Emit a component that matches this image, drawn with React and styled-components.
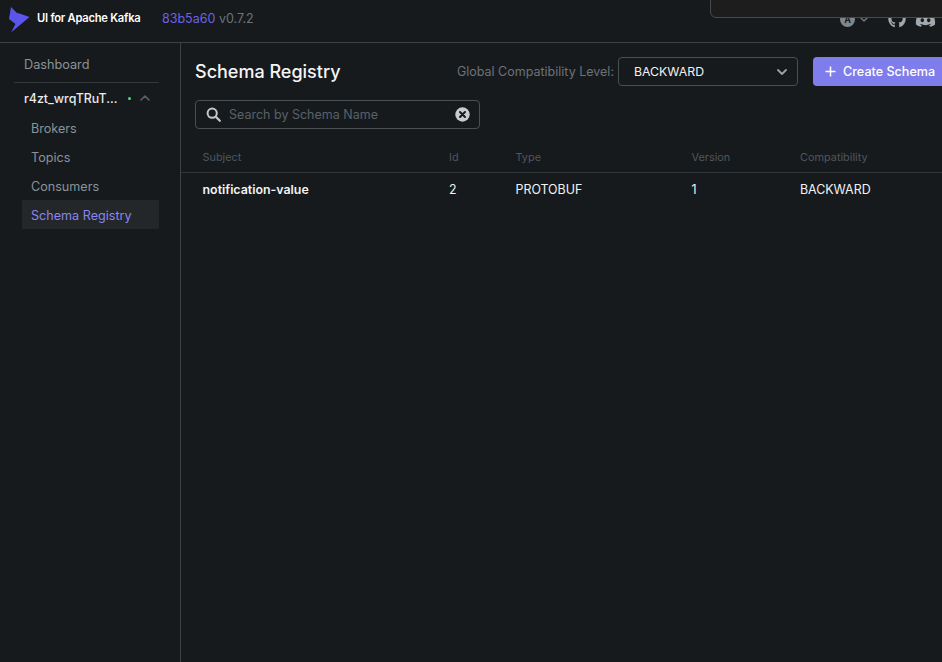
import React from "react";
import styled, { createGlobalStyle } from "styled-components";
import { FaGithub, FaDiscord } from "react-icons/fa";

const GlobalStyle = createGlobalStyle`
  html, body {
    margin: 0;
    height: 100%;
    overflow: hidden;
    background: #171a1c;
    font-family: Inter, "Liberation Sans", sans-serif;
    font-size: 14px;
  }
  #root { height: 100%; }
`;

const Page = styled.div`
  position: relative;
  width: 942px;
  height: 662px;
  overflow: hidden;
  background: #171a1c;
  display: flex;
  flex-direction: column;
`;

// top bar
const Header = styled.header`
  flex: 0 0 43px;
  box-sizing: border-box;
  border-bottom: 1px solid #3d4144;
  display: flex;
  align-items: center;
  padding: 0 6px 6px 9px;
`;

const Brand = styled.div`
  width: 153px;
  display: flex;
  align-items: center;
  gap: 7px;
  color: #fff;
  font-size: 11.2px;
  font-weight: 600;
  letter-spacing: -0.25px;
`;

const LogoMark = styled.svg`
  margin-top: 3px;
  flex: none;
`;

const Version = styled.div`
  font-size: 12.5px;
  color: #6b7278;
  b {
    font-weight: 400;
    color: #6a63e8;
  }
`;

const HeaderIcons = styled.div`
  margin-left: auto;
  margin-top: 2px;
  display: flex;
  align-items: center;
  color: #a1a8ae;
`;

const Avatar = styled.span`
  width: 15px;
  height: 15px;
  border-radius: 50%;
  background: #7f878d;
  color: #171a1c;
  font-size: 9px;
  font-weight: 700;
  display: flex;
  align-items: center;
  justify-content: center;
  margin-right: 4px;
`;

const IconGap = styled.span`
  display: flex;
  margin-left: ${(p) => p.$left}px;
`;

const Popup = styled.div`
  position: absolute;
  top: -10px;
  left: 710px;
  width: 280px;
  height: 28px;
  box-sizing: border-box;
  background: #1e1d1d;
  border: 1px solid #454a4d;
  border-radius: 6px;
`;

const Body = styled.div`
  flex: 1;
  display: flex;
  min-height: 0;
`;

// left nav
const Sidebar = styled.nav`
  flex: 0 0 181px;
  box-sizing: border-box;
  border-right: 1px solid #3d4144;
  padding: 7px 21px 0 14px;
`;

const DashLink = styled.div`
  height: 33px;
  box-sizing: border-box;
  border-bottom: 1px solid #33373a;
  padding: 7px 0 0 10px;
  color: #8b9299;
  font-size: 12.7px;
  line-height: 16px;
`;

const Cluster = styled.div`
  height: 30px;
  display: flex;
  align-items: center;
  padding-left: 10px;
  color: #e8eaec;
  font-size: 12.4px;
  font-weight: 500;
`;

const Dot = styled.span`
  width: 3px;
  height: 3px;
  border-radius: 50%;
  background: #5cd685;
  margin: 0 9px 0 10px;
`;

const NavItem = styled.div`
  height: 29px;
  box-sizing: border-box;
  margin-left: 8px;
  padding: 1px 0 0 9px;
  display: flex;
  align-items: center;
  font-size: 12.6px;
  color: ${(p) => (p.$active ? "#8a85f0" : "#8b9299")};
  background: ${(p) => (p.$active ? "#23272a" : "transparent")};
`;

// main content
const Main = styled.main`
  flex: 1;
  min-width: 0;
`;

const TitleRow = styled.div`
  height: 57px;
  display: flex;
  align-items: center;
  padding-left: 14px;
`;

const Title = styled.h1`
  margin: 0 auto 0 0;
  font-size: 18px;
  line-height: 24px;
  font-weight: 500;
  color: #f4f5f6;
`;

const GlobalLabel = styled.span`
  font-size: 12.5px;
  color: #6b7278;
  margin-right: 4px;
`;

const Select = styled.div`
  width: 180px;
  height: 29px;
  box-sizing: border-box;
  border: 1px solid #4a4f52;
  border-radius: 4px;
  padding: 0 10px 0 15px;
  display: flex;
  align-items: center;
  justify-content: space-between;
  color: #f1f2f3;
  font-size: 12.3px;
`;

const CreateButton = styled.button`
  width: 134px;
  height: 29px;
  margin: 0 -5px 0 15px;
  flex: none;
  border: 0;
  border-radius: 4px;
  background: #7f7ceb;
  color: #fff;
  font: 500 12.6px Inter, "Liberation Sans", sans-serif;
  display: flex;
  align-items: center;
  gap: 7px;
  padding: 0 0 0 12px;
`;

const SearchBox = styled.div`
  width: 285px;
  height: 29px;
  margin-left: 14px;
  box-sizing: border-box;
  border: 1px solid #4a4f52;
  border-radius: 4px;
  padding: 0 9px 0 10px;
  display: flex;
  align-items: center;
  color: #5a6167;
  font-size: 12.5px;
`;

const SearchText = styled.span`
  margin-left: 8px;
  flex: 1;
`;

const Row = styled.div`
  display: grid;
  grid-template-columns: 246.5px 66.5px 176px 108.5px 1fr;
  padding-left: 21.5px;
  align-items: center;
`;

const HeadRow = styled(Row)`
  margin-top: 14px;
  height: 30px;
  box-sizing: border-box;
  border-bottom: 1px solid #33373a;
  padding-bottom: 2px;
  color: #4f565c;
  font-size: 10.9px;
`;

const BodyRow = styled(Row)`
  height: 33px;
  color: #f1f2f3;
  font-size: 12.4px;
`;

const Subject = styled.span`
  font-weight: 600;
`;

function Chevron({ up, size = 10, color = "#8b9299", width = 1.6 }) {
  return (
    <svg width={size} height={size} viewBox="0 0 10 10" fill="none">
      <path
        d={up ? "M1 7l4-4 4 4" : "M1 3l4 4 4-4"}
        stroke={color}
        strokeWidth={width}
        strokeLinecap="round"
        strokeLinejoin="round"
      />
    </svg>
  );
}

function Logo() {
  return (
    <LogoMark width="21" height="26" viewBox="0 0 21 26">
      <path d="M2 0l6 6 2.5.5L20.5 10 11 18 2 25.5 6.5 17 0 12z" fill="#5b55ec" />
    </LogoMark>
  );
}

function SearchIcon() {
  return (
    <svg width="15" height="15" viewBox="0 0 15 15" fill="none">
      <circle cx="6.2" cy="6.2" r="4.6" stroke="#c4c8cb" strokeWidth="2" />
      <path d="M9.8 9.8L13.8 13.8" stroke="#c4c8cb" strokeWidth="2.2" strokeLinecap="round" />
    </svg>
  );
}

function ClearIcon() {
  return (
    <svg width="15" height="15" viewBox="0 0 15 15">
      <circle cx="7.5" cy="7.5" r="7.2" fill="#c9cccf" />
      <path d="M5 5l5 5M10 5l-5 5" stroke="#171a1c" strokeWidth="2" strokeLinecap="round" />
    </svg>
  );
}

function PlusIcon() {
  return (
    <svg width="11" height="11" viewBox="0 0 11 11" fill="none">
      <path d="M5.5 0.5v10M0.5 5.5h10" stroke="#fff" strokeWidth="1.5" />
    </svg>
  );
}

const columns = ["Subject", "Id", "Type", "Version", "Compatibility"];

export default function App() {
  return (
    <Page>
      <GlobalStyle />
      <Header>
        <Brand>
          <Logo />
          UI for Apache Kafka
        </Brand>
        <Version>
          <b>83b5a60</b> v0.7.2
        </Version>
        <HeaderIcons>
          <Avatar>A</Avatar>
          <Chevron color="#6b7278" />
          <IconGap $left={19}>
            <FaGithub size={18} />
          </IconGap>
          <IconGap $left={9}>
            <FaDiscord size={21} />
          </IconGap>
        </HeaderIcons>
      </Header>
      <Popup />
      <Body>
        <Sidebar>
          <DashLink>Dashboard</DashLink>
          <Cluster>
            r4zt_wrqTRuT...
            <Dot />
            <Chevron up color="#5a6167" />
          </Cluster>
          <NavItem>Brokers</NavItem>
          <NavItem>Topics</NavItem>
          <NavItem>Consumers</NavItem>
          <NavItem $active>Schema Registry</NavItem>
        </Sidebar>
        <Main>
          <TitleRow>
            <Title>Schema Registry</Title>
            <GlobalLabel>Global Compatibility Level:</GlobalLabel>
            <Select>
              BACKWARD
              <Chevron color="#9aa1a6" width={1.8} />
            </Select>
            <CreateButton>
              <PlusIcon />
              Create Schema
            </CreateButton>
          </TitleRow>
          <SearchBox>
            <SearchIcon />
            <SearchText>Search by Schema Name</SearchText>
            <ClearIcon />
          </SearchBox>
          <HeadRow>
            {columns.map((c) => (
              <span key={c}>{c}</span>
            ))}
          </HeadRow>
          <BodyRow>
            <Subject>notification-value</Subject>
            <span>2</span>
            <span>PROTOBUF</span>
            <span>1</span>
            <span>BACKWARD</span>
          </BodyRow>
        </Main>
      </Body>
    </Page>
  );
}
